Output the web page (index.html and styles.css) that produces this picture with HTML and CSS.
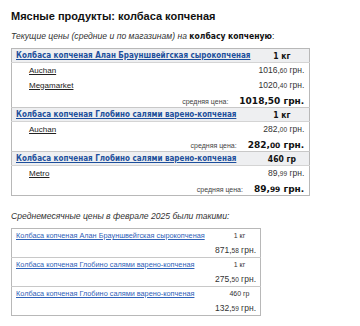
FILE: index.html
```html
<!DOCTYPE html>
<html lang="ru">
<head>
<meta charset="utf-8">
<link rel="stylesheet" href="styles.css">
</head>
<body>
<div class="page">
  <h1 class="title">Мясные продукты: колбаса копченая</h1>
  <p class="intro"><i>Текущие цены (средние и по магазинам) на</i> <b>колбасу копченую</b>:</p>

  <table class="cur">
    <tbody class="grp">
      <tr class="head"><td class="name"><a href="#">Колбаса копченая Алан Брауншвейгская сырокопченая</a></td><td class="unit">1 кг</td></tr>
      <tr><td class="shop"><a href="#">Auchan</a></td><td class="price">1016,<small>60</small> грн.</td></tr>
      <tr><td class="shop"><a href="#">Megamarket</a></td><td class="price">1020,<small>40</small> грн.</td></tr>
      <tr class="avg"><td class="avglabel" colspan="2"><span class="lbl">средняя цена:</span><b>1018,50 грн.</b></td></tr>
    </tbody>
    <tbody class="grp">
      <tr class="head"><td class="name"><a href="#">Колбаса копченая Глобино салями варено-копченая</a></td><td class="unit">1 кг</td></tr>
      <tr><td class="shop"><a href="#">Auchan</a></td><td class="price">282,<small>00</small> грн.</td></tr>
      <tr class="avg"><td class="avglabel" colspan="2"><span class="lbl">средняя цена:</span><b>282,<span class="sm">00</span> грн.</b></td></tr>
    </tbody>
    <tbody class="grp">
      <tr class="head"><td class="name"><a href="#">Колбаса копченая Глобино салями варено-копченая</a></td><td class="unit">460 гр</td></tr>
      <tr><td class="shop"><a href="#">Metro</a></td><td class="price">89,<small>99</small> грн.</td></tr>
      <tr class="avg"><td class="avglabel" colspan="2"><span class="lbl">средняя цена:</span><b>89,<span class="sm">99</span> грн.</b></td></tr>
    </tbody>
  </table>

  <p class="intro2"><i>Среднемесячные цены в феврале 2025 были такими:</i></p>

  <table class="month">
    <tbody class="grp">
      <tr><td class="name"><a href="#">Колбаса копченая Алан Брауншвейгская сырокопченая</a></td><td class="unit">1 кг</td></tr>
      <tr><td></td><td class="mprice">871,<small>58</small> грн.</td></tr>
    </tbody>
    <tbody class="grp">
      <tr><td class="name"><a href="#">Колбаса копченая Глобино салями варено-копченая</a></td><td class="unit">1 кг</td></tr>
      <tr><td></td><td class="mprice">275,<small>50</small> грн.</td></tr>
    </tbody>
    <tbody class="grp">
      <tr><td class="name"><a href="#">Колбаса копченая Глобино салями варено-копченая</a></td><td class="unit">460 гр</td></tr>
      <tr><td></td><td class="mprice">132,<small>59</small> грн.</td></tr>
    </tbody>
  </table>
</div>
</body>
</html>
```

FILE: styles.css
```css
html, body {
  margin: 0;
  padding: 0;
  background: #fff;
}
.page {
  padding: 10px 11px;
  font-family: "Liberation Sans", Arial, sans-serif;
  color: #222;
}
.title {
  margin: 0;
  font-size: 11px;
  font-weight: bold;
  color: #111;
  line-height: 12px;
}
.intro {
  margin: 8px 0 0;
  font-size: 8.6px;
  line-height: 12px;
  color: #333;
  white-space: nowrap;
}
.intro b {
  font-family: "DejaVu Sans Condensed", "DejaVu Sans", sans-serif;
  font-size: 8.5px;
  color: #111;
}
table {
  border-collapse: collapse;
}
td {
  white-space: nowrap;
  line-height: 10px;
  vertical-align: middle;
}
.cur {
  margin-top: 6px;
  width: 290px;
  border: 1px solid #b8b8b8;
}
.cur .grp + .grp .head td {
  border-top: 1px solid #c8c8c8;
}
.cur .head td {
  background: #eeeff1;
  height: 13px;
  padding: 0 4px;
  border-bottom: 1px solid #d4d4d4;
  font-family: "DejaVu Sans Condensed", "DejaVu Sans", sans-serif;
  font-weight: bold;
  font-size: 8px;
}
.cur .head .name a {
  color: #1d4f9c;
  text-decoration: underline;
}
.cur .head .unit {
  text-align: center;
  width: 30px;
  color: #111;
  font-size: 8.5px;
}
.cur td {
  padding: 0 4px;
  height: 15px;
}
.cur .avg td {
  height: 14px;
}
.shop {
  padding-left: 17px !important;
  font-size: 8px;
}
.shop a {
  color: #222;
  text-decoration: underline;
}
.price {
  text-align: right;
  font-size: 8.5px;
  color: #333;
  padding-right: 5px !important;
}
small {
  font-size: 6.5px;
}
.avglabel {
  text-align: right;
  padding-right: 5px !important;
}
.lbl {
  font-size: 7px;
  color: #444;
  margin-right: 11px;
}
.avglabel b {
  font-family: "DejaVu Sans", Verdana, sans-serif;
  font-size: 9px;
  color: #111;
}
.avglabel b .sm {
  font-size: 7.5px;
}
.intro2 {
  margin: 14px 0 0;
  font-size: 8.6px;
  line-height: 12px;
  color: #333;
}
.month {
  margin-top: 6px;
  width: 250px;
  border: 1px solid #b8b8b8;
}
.month .grp + .grp tr:first-child td {
  border-top: 1px solid #c8c8c8;
}
.month td {
  height: 14px;
  padding: 0 4px;
  font-size: 7.3px;
  color: #333;
}
.month .name a {
  color: #2f62b8;
  text-decoration: underline;
}
.month .unit {
  text-align: center;
  width: 32px;
  font-size: 7px;
  padding-left: 10px;
  padding-right: 2px;
}
.mprice {
  text-align: right;
  font-size: 8.5px !important;
}
.month small {
  font-size: 6.5px;
}
```
